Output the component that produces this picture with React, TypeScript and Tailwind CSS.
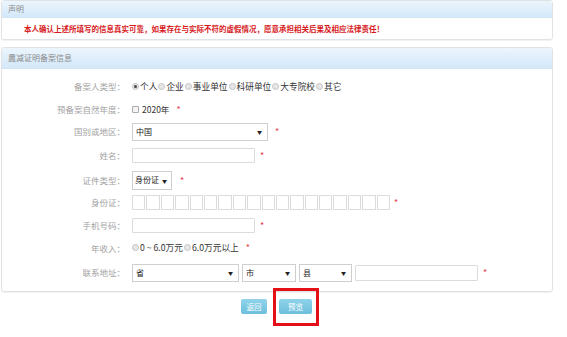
import React from "react";

const font = { fontFamily: '"Noto Sans CJK SC", "Noto Sans", sans-serif' };

const Star = ({ ml = "ml-[5px]" }: { ml?: string }) => (
  <span className={`text-[#e5404a] text-[9px] leading-none ${ml}`}>*</span>
);

const Radio = ({ checked = false }: { checked?: boolean }) => (
  <span className="inline-flex items-center justify-center w-[7px] h-[7px] rounded-full border border-[#c4c4c4] bg-[#e6e6e6] mr-[1px]">
    {checked && <span className="w-[3px] h-[3px] rounded-full bg-[#444]" />}
  </span>
);

const Arrow = () => <span className="text-[5px] text-[#222] leading-none">▼</span>;

const Select = ({ w, text }: { w: string; text: string }) => (
  <div className={`${w} h-[18px] border border-[#cfcfcf] bg-white flex items-center justify-between pl-[3px] pr-[5px] text-[8px] text-[#222]`}>
    <span>{text}</span>
    <Arrow />
  </div>
);

const Input = ({ w, h = "h-[16px]" }: { w: string; h?: string }) => (
  <div className={`${w} ${h} border border-[#dcdcdc] bg-white rounded-[1px]`} />
);

const Row = ({ h, label, children }: { h: string; label: string; children: React.ReactNode }) => (
  <div className={`flex items-center ${h}`}>
    <div className="w-[124px] text-right text-[8.5px] text-[#a3a3a3] pr-[1px] whitespace-nowrap">{label}</div>
    <div className="flex items-center ml-[6px]">{children}</div>
  </div>
);

const PanelHeader = ({ title, h }: { title: string; h: string }) => (
  <div className={`${h} flex items-center px-[6px] text-[8px] text-[#8a8a8a] bg-gradient-to-b from-[#ecf5fd] to-[#d3e8fa] border-b border-[#d2e3f2] rounded-t-[3px]`}>
    {title}
  </div>
);

export default function App() {
  const types = ["企业", "事业单位", "科研单位", "大专院校", "其它"];
  return (
    <div className="w-[567px] h-[337px] bg-white overflow-hidden" style={font}>
      <div className="w-[552px] ml-[1px] flex flex-col">
        {/* Panel 1 */}
        <div className="h-[40px] border border-[#e0e3e6] rounded-[3px] shadow-[0_1px_1px_rgba(0,0,0,0.06)] flex flex-col">
          <PanelHeader title="声明" h="h-[17px]" />
          <div className="flex-1 flex items-center pl-[22px] text-[7.5px] font-bold text-[#d7191d]">
            本人确认上述所填写的信息真实可靠，如果存在与实际不符的虚假情况，愿意承担相关后果及相应法律责任！
          </div>
        </div>

        {/* Panel 2 */}
        <div className="mt-[7px] h-[245px] border border-[#e0e3e6] rounded-[3px] shadow-[0_1px_1px_rgba(0,0,0,0.06)] flex flex-col">
          <PanelHeader title="農减证明备案信息" h="h-[21px]" />
          <div className="pt-[6px] flex flex-col">
            <Row h="h-[23px]" label="备案人类型：">
              <div className="flex items-center text-[8.7px] text-[#333]">
                <Radio checked />
                <span className="mr-[1px]">个人</span>
                {types.map((t) => (
                  <span key={t} className="flex items-center mr-[1px]">
                    <Radio />
                    <span>{t}</span>
                  </span>
                ))}
              </div>
            </Row>
            <Row h="h-[22px]" label="预备案自然年度：">
              <span className="w-[7px] h-[7px] border border-[#aaa] bg-[#f4f4f4] rounded-[1px] mr-[3px]" />
              <span className="text-[8.5px] text-[#333]">2020年</span>
              <Star ml="ml-[7px]" />
            </Row>
            <Row h="h-[23px]" label="国别或地区：">
              <Select w="w-[136px]" text="中国" />
              <Star ml="ml-[7px]" />
            </Row>
            <Row h="h-[24px]" label="姓名：">
              <Input w="w-[123px]" h="h-[15px]" />
              <Star ml="ml-[5px]" />
            </Row>
            <Row h="h-[26px]" label="证件类型：">
              <div className="w-[40px] h-[19px] border border-[#cfcfcf] bg-white flex items-center justify-between pl-[2px] pr-[4px] text-[8px] text-[#222]">
                <span>身份证</span>
                <Arrow />
              </div>
              <Star ml="ml-[8px]" />
            </Row>
            <Row h="h-[19px]" label="身份证：">
              <div className="flex gap-[1px]">
                {Array.from({ length: 18 }).map((_, i) => (
                  <div key={i} className="w-[13.4px] h-[15px] border border-[#dcdcdc] bg-white" />
                ))}
              </div>
              <Star ml="ml-[4px]" />
            </Row>
            <Row h="h-[27px]" label="手机号码：">
              <Input w="w-[123px]" h="h-[15px]" />
              <Star ml="ml-[5px]" />
            </Row>
            <Row h="h-[18px]" label="年收入：">
              <div className="flex items-center text-[8.7px] text-[#333]">
                <Radio />
                <span className="mr-[1px]">0 ~ 6.0万元</span>
                <Radio />
                <span>6.0万元以上</span>
              </div>
              <Star ml="ml-[7px]" />
            </Row>
            <Row h="h-[31px]" label="联系地址：">
              <div className="flex items-center gap-[3px]">
                <Select w="w-[107px]" text="省" />
                <Select w="w-[54px]" text="市" />
                <Select w="w-[53px]" text="县" />
                <Input w="w-[123px]" h="h-[16px]" />
              </div>
              <Star ml="ml-[5px]" />
            </Row>
          </div>
        </div>

        {/* Buttons */}
        <div className="flex items-start pl-[240px] mt-[-4px]">
          <div className="mt-[11px] w-[26px] h-[15px] rounded-[2px] bg-gradient-to-b from-[#8fd3ea] to-[#6dbfdc] text-white text-[7.5px] flex items-center justify-center">
            返回
          </div>
          <div className="ml-[6px] border-[3px] border-[#e50f17] pl-[3px] pr-[4px] pt-[8px] pb-[9px]">
            <div className="w-[33px] h-[15px] rounded-[2px] bg-gradient-to-b from-[#8fd3ea] to-[#6dbfdc] text-white text-[7.5px] flex items-center justify-center">
              预览
            </div>
          </div>
        </div>
      </div>
    </div>
  );
}
